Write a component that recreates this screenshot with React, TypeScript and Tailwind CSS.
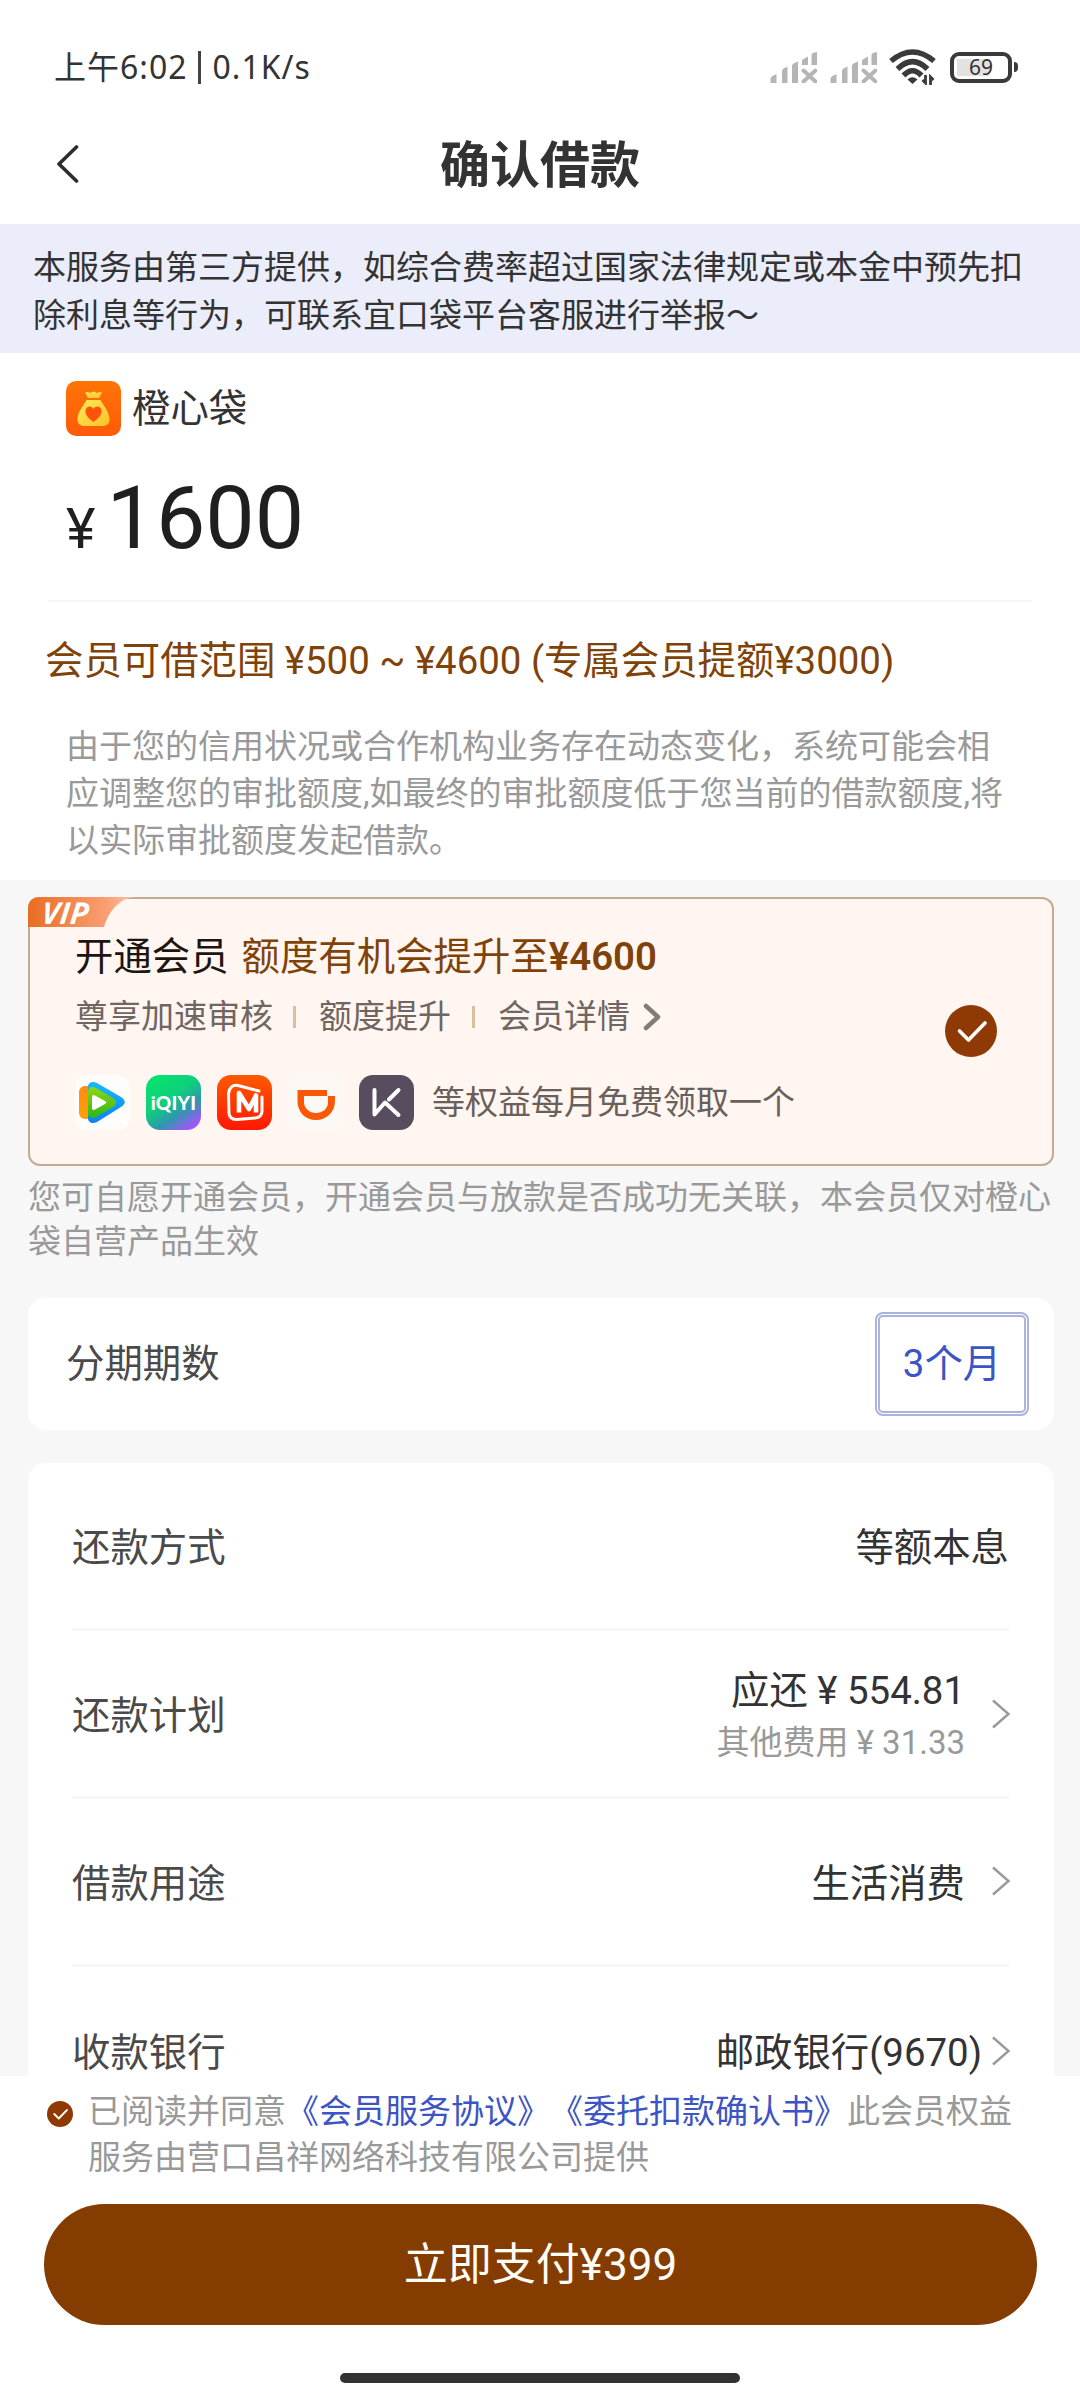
import type { ReactNode } from 'react';

function SignalIcon() {
  return (
    <svg className="block h-8 w-12" viewBox="0 0 48 32" fill="#b5b5b5">
      <path d="M1.5 28q0-2 2-3l4-2v9h-6zM13 20q0-1.5 1.5-2.500l4-2V32H13zM23 15q0-1.500 1.500-2.500L29 10.500V32h-6zM33 9l6-3.500V14h-6zM42.500 4.500q0-2 2-2.800L48.500 1v13h-6z" />
      <path d="M34.500 19.500l12 11M46.500 19.500l-12 11" stroke="#b5b5b5" strokeWidth="4" strokeLinecap="round" />
    </svg>
  );
}

function WifiIcon() {
  return (
    <svg className="block h-9 w-12" viewBox="0 0 48 36" fill="none" stroke="#3a3a3a" strokeWidth="5.500">
      <path d="M2 12Q23.500-6 45 12" />
      <path d="M8.500 20Q23.500 5 38.500 20" />
      <path d="M14.500 26.500Q23.500 17 32.500 26.500" />
      <path d="M18.500 30.500q5-4.500 10 0l-5 4.500z" fill="#3a3a3a" stroke="none" />
      <path d="M36.500 26v8l-3-3M41.500 36v-8l3 3" strokeWidth="2.800" />
    </svg>
  );
}

function Battery() {
  return (
    <div className="flex items-center gap-[2px]">
      <div className="flex h-[31px] w-[62px] items-center rounded-[9px] border-4 border-[#3a3a3a] p-[3px]">
        <div className="relative flex h-full w-full items-center justify-center">
          <div className="absolute inset-y-0 left-0 w-[69%] bg-[#e2e2e2]" />
          <span className="relative font-['Noto_Sans'] text-[21px] leading-none text-[#333]">69</span>
        </div>
      </div>
      <div className="h-[10px] w-1 rounded-r bg-[#3a3a3a]" />
    </div>
  );
}

function Chevron() {
  return (
    <svg className="-mr-[2px] block h-[30px] w-5" viewBox="0 0 20 30" fill="none" stroke="#999" strokeWidth="2.400">
      <path d="M2 1.500L17.500 15 2 28.500" />
    </svg>
  );
}

function BagLogo() {
  return (
    <svg className="block size-[55px]" viewBox="0 0 55 55">
      <defs>
        <linearGradient id="bagBg" x1="0" y1="0" x2="0" y2="1">
          <stop offset="0" stopColor="#ff7505" />
          <stop offset="1" stopColor="#ff5a0a" />
        </linearGradient>
        <linearGradient id="bagFill" x1="0" y1="0" x2="1" y2="1">
          <stop offset="0" stopColor="#ffe95a" />
          <stop offset="1" stopColor="#ffc226" />
        </linearGradient>
      </defs>
      <rect width="55" height="55" rx="10" fill="url(#bagBg)" />
      <path d="M19 12q2-2 5 0 3.500-3 7 0 3-2 5 0-2 2-3 5H22q-1-3-3-5z" fill="url(#bagFill)" />
      <path d="M20.500 19h14c2.500 5 9 12 9 19 0 5-3 7-7 7h-18c-4 0-7-2-7-7 0-7 6.500-14 9-19z" fill="url(#bagFill)" />
      <path d="M27.500 41c-4-3-8-6-8-11 0-5 6-6 8-2 2-4 8-3 8 2 0 5-4 8-8 11z" fill="#ff520a" />
    </svg>
  );
}

function TencentIcon() {
  return (
    <svg className="block size-[55px]" viewBox="0 0 55 55">
      <defs>
        <linearGradient id="tvBlue" x1="0" y1="0" x2="0" y2="1">
          <stop offset="0" stopColor="#18b9ff" />
          <stop offset="1" stopColor="#0c80f0" />
        </linearGradient>
        <linearGradient id="tvGreen" x1="0" y1="0" x2="0" y2="1">
          <stop offset="0" stopColor="#90d70c" />
          <stop offset="1" stopColor="#2fb51f" />
        </linearGradient>
        <linearGradient id="tvOrange" x1="0" y1="0" x2="0" y2="1">
          <stop offset="0" stopColor="#ff8a18" />
          <stop offset="1" stopColor="#ffa200" />
        </linearGradient>
      </defs>
      <rect width="55" height="55" rx="12" fill="#fffdfc" />
      <rect x="4" y="11" width="14" height="33" rx="6" fill="url(#tvOrange)" />
      <path d="M13 12c0-5 5-6 9-4l24 14c5 3 5 7 0 10L22 47c-4 2-9 1-9-4z" fill="url(#tvBlue)" />
      <path d="M13 18c0-6 4-7 8-5l17 10c4 3 4 6 0 9L21 42c-4 2-8 1-8-4z" fill="url(#tvGreen)" />
      <path d="M17 22q0-3 3-1.500l10 5.500q2.500 1.500 0 3l-10 5.500q-3 1.500-3-1.500z" fill="#fff" />
    </svg>
  );
}

function IqiyiIcon() {
  return (
    <div className="flex size-[55px] items-center justify-center rounded-[14px] bg-[linear-gradient(145deg,#06e66c_0%,#0ed07c_42%,#2e97ad_66%,#9b5af5_88%,#b455ff_100%)] font-['Lato'] text-[19px] font-black leading-none tracking-[0.3px] text-white">
      iQIYI
    </div>
  );
}

function MangoIcon() {
  return (
    <svg className="block size-[55px]" viewBox="0 0 55 55">
      <defs>
        <linearGradient id="mango" x1="0" y1="0" x2="0" y2="1">
          <stop offset="0" stopColor="#ff5a00" />
          <stop offset="1" stopColor="#ff1800" />
        </linearGradient>
      </defs>
      <rect width="55" height="55" rx="14" fill="url(#mango)" />
      <path
        d="M42 16L21 10.500c-5-1.500-9 2.500-9.500 8l.5 20c.5 4.500 4 6 8 6l18-1.500c5-.5 7-3 7-7V22"
        fill="none"
        stroke="#fff"
        strokeWidth="3"
        strokeLinecap="round"
        strokeLinejoin="round"
      />
      <path d="M22 37.500V18L32 34 39 20.500V37.500" fill="none" stroke="#fff" strokeWidth="4.600" strokeLinejoin="round" />
    </svg>
  );
}

function DidiIcon() {
  return (
    <svg className="block size-[55px]" viewBox="0 0 55 55">
      <rect width="55" height="55" rx="12" fill="#fcf8f6" />
      <path d="M9.500 15H39v6h8v4.500C47 37 39 45 28 45S9.500 37 9.500 26zM16 21v6c0 6 5 11 12 11 6.500 0 12-4 12-11v-6z" fill="#fa5805" fillRule="evenodd" />
    </svg>
  );
}

function KeepIcon() {
  return (
    <svg className="block size-[55px]" viewBox="0 0 55 55" fill="none" stroke="#fff" strokeWidth="4" strokeLinecap="round" strokeLinejoin="round">
      <rect width="55" height="55" rx="14" fill="#584c5f" stroke="none" />
      <path d="M15.500 15v24.500L26 27.500 39.500 40M30 24.500L39.500 15" />
    </svg>
  );
}

function Check({ className = '' }: { className?: string }) {
  return (
    <svg className={`block ${className}`} viewBox="0 0 52 52">
      <circle cx="26" cy="26" r="26" fill="#8f3a04" />
      <path d="M14.500 26l9 9L40 18" fill="none" stroke="#fff" strokeWidth="3.600" strokeLinecap="round" strokeLinejoin="round" />
    </svg>
  );
}

function Row({ label, children, last = false }: { label: string; children: ReactNode; last?: boolean }) {
  return (
    <div className={`flex h-[168px] items-center justify-between ${last ? '' : 'border-b-[3px] border-[#f6f6f6]'}`}>
      <span className="pt-1 text-[#4a4a4a]">{label}</span>
      {children}
    </div>
  );
}

export default function App() {
  return (
    <div className="flex h-[2400px] w-[1080px] flex-col overflow-hidden bg-white font-['Roboto','Noto_Sans_CJK_SC',sans-serif] text-[33px] text-[#333] [text-spacing-trim:space-all]">
      <div className="flex h-[104px] items-center justify-between pl-[54px] pr-[62px] pt-[30px]">
        <div className="flex items-center whitespace-nowrap font-['Noto_Sans','Noto_Sans_CJK_SC',sans-serif] text-[32px] tracking-[1px]">
          <span>上午6:02</span>
          <i className="ml-[10px] mr-[12px] h-[33px] w-[3px] bg-[#444]" />
          <span>0.1K/s</span>
        </div>
        <div className="flex items-center">
          <SignalIcon />
          <div className="w-3" />
          <SignalIcon />
          <div className="w-3" />
          <WifiIcon />
          <div className="w-[13px]" />
          <Battery />
        </div>
      </div>

      <header className="flex h-[120px] items-center px-[56px]">
        <svg className="block h-[38px] w-6" viewBox="0 0 24 38" fill="none" stroke="#2c2c2c" strokeWidth="3.600" strokeLinecap="round" strokeLinejoin="round">
          <path d="M20.500 2L3 19l17.500 17" />
        </svg>
        <h1 className="flex-1 pr-6 pt-[3px] text-center text-[50px] font-bold leading-[60px]">确认借款</h1>
      </header>

      <div className="h-[129px] bg-[#ebedfb] pl-[33px] pt-5 leading-[48px] text-[#333]">
        <p>本服务由第三方提供，如综合费率超过国家法律规定或本金中预先扣</p>
        <p>除利息等行为，可联系宜口袋平台客服进行举报～</p>
      </div>

      <section className="h-[527px]">
        <div className="flex items-center gap-[11px] pl-[66px] pt-7">
          <BagLogo />
          <span className="text-[38.400px] leading-[55px]">橙心袋</span>
        </div>
        <div className="flex items-baseline gap-[11px] pl-[66px] pt-[30px] leading-[104px] text-[#1f1f1f]">
          <span className="text-[56px]">¥</span>
          <span className="text-[88px]">1600</span>
        </div>
        <div className="mx-12 mt-[19px] h-[2px] bg-[#f6f6f6]" />
        <div className="whitespace-nowrap pl-[45px] pt-[31px] text-[38.400px] leading-[56px] text-[#7f4309]">会员可借范围 ¥500 ~ ¥4600 (专属会员提额¥3000)</div>
        <div className="whitespace-nowrap pl-[66px] pt-[34px] leading-[47px] text-[#999]">
          <p>由于您的信用状况或合作机构业务存在动态变化，系统可能会相</p>
          <p>应调整您的审批额度,如最终的审批额度低于您当前的借款额度,将</p>
          <p>以实际审批额度发起借款。</p>
        </div>
      </section>

      <main className="h-[1196px] overflow-hidden bg-[#f7f7f7] px-[28px] pt-[17px]">
        <section className="relative h-[269px] w-[1026px] rounded-[12px] border-2 border-[#c2ac94] bg-[#fff6f1] pl-[45px] pt-[33px]">
          <div className="absolute -left-[2px] -top-[2px] h-[30px] w-[106px]">
            <svg className="absolute inset-0" width="106" height="30" viewBox="0 0 106 30">
              <defs>
                <linearGradient id="vip" x1="0" y1="0" x2="1" y2="0">
                  <stop offset="0" stopColor="#e96d22" />
                  <stop offset="0.75" stopColor="#fa9f74" />
                  <stop offset="1" stopColor="#fdc4a4" />
                </linearGradient>
              </defs>
              <path d="M0 12Q0 0 12 0H106C90 2 80 16 76 30H0z" fill="url(#vip)" />
            </svg>
            <span className="absolute left-[14px] top-[1px] -skew-x-6 font-['Open_Sans'] text-[30px] font-bold italic leading-[30px] tracking-[0.5px] text-white">VIP</span>
          </div>
          <div className="text-[38.400px] leading-[50px] text-[#7f4309]">
            <span className="mr-[13px] text-[#20140e]">开通会员</span>额度有机会提升至<b className="font-semibold">¥4600</b>
          </div>
          <div className="mt-[11px] flex items-center leading-[48px] text-[#706560]">
            <span>尊享加速审核</span>
            <i className="ml-[20px] mr-[23px] h-[22px] w-[3px] bg-[#dcc09c]" />
            <span>额度提升</span>
            <i className="ml-[21px] mr-[23px] h-[22px] w-[3px] bg-[#dcc09c]" />
            <span>会员详情</span>
            <svg className="ml-[13px] block h-[28px] w-[18px]" viewBox="0 0 18 28" fill="none" stroke="#857a75" strokeWidth="4.500" strokeLinecap="round" strokeLinejoin="round">
              <path d="M3 3l12 11L3 25" />
            </svg>
          </div>
          <div className="mt-[34px] flex h-[55px] items-center gap-4 leading-[55px] text-[#6a5f5a]">
            <TencentIcon />
            <IqiyiIcon />
            <MangoIcon />
            <DidiIcon />
            <KeepIcon />
            <span className="ml-[2px] whitespace-nowrap">等权益每月免费领取一个</span>
          </div>
          <Check className="absolute right-[55px] top-[106px] size-[52px]" />
        </section>

        <div className="h-[132px] whitespace-nowrap pt-[10px] leading-[44px] text-[#999]">
          <p>您可自愿开通会员，开通会员与放款是否成功无关联，本会员仅对橙心</p>
          <p>袋自营产品生效</p>
        </div>

        <section className="flex h-[132px] w-[1026px] items-center justify-between rounded-[18px] bg-white pl-[38px] pr-[25px] text-[38.400px]">
          <span className="text-[#4a4a4a]">分期期数</span>
          <div className="h-[104px] w-[154px] rounded-[8px] border-2 border-[#aab2de] p-px">
            <div className="flex h-full items-center justify-center rounded-[5px] border-2 border-[#aab2de] text-[#3c54c4]">3个月</div>
          </div>
        </section>

        <section className="mt-[33px] w-[1026px] rounded-t-[18px] bg-white pl-[44px] pr-[45px] text-[38.400px]">
          <Row label="还款方式">
            <span className="pt-1">等额本息</span>
          </Row>
          <Row label="还款计划">
            <div className="flex items-center gap-[26px]">
              <div className="flex flex-col items-end pt-1">
                <span className="leading-[54px]">应还 ¥ 554.81</span>
                <span className="text-[33px] leading-[50px] text-[#999]">其他费用 ¥ 31.33</span>
              </div>
              <Chevron />
            </div>
          </Row>
          <Row label="借款用途">
            <div className="flex items-center gap-[26px]">
              <span className="pt-1">生活消费</span>
              <Chevron />
            </div>
          </Row>
          <Row label="收款银行" last>
            <div className="flex items-center gap-[9px]">
              <span className="pt-1">邮政银行(9670)</span>
              <Chevron />
            </div>
          </Row>
        </section>
      </main>

      <footer className="flex flex-1 flex-col">
        <div className="flex h-[128px] gap-[15px] whitespace-nowrap pl-[47px] pt-[13px] leading-[46px] text-[#999]">
          <Check className="mt-[12px] size-[26px]" />
          <div>
            <p>
              已阅读并同意<span className="text-[#3c54c4]">《会员服务协议》《委托扣款确认书》</span>此会员权益
            </p>
            <p>服务由营口昌祥网络科技有限公司提供</p>
          </div>
        </div>
        <button className="ml-[44px] h-[121px] w-[993px] rounded-full bg-[#843c00] text-[44px] leading-none text-[#fffdf8]">立即支付¥399</button>
        <div className="mx-auto mt-[48px] h-[10px] w-[400px] rounded-full bg-[#333]" />
      </footer>
    </div>
  );
}
